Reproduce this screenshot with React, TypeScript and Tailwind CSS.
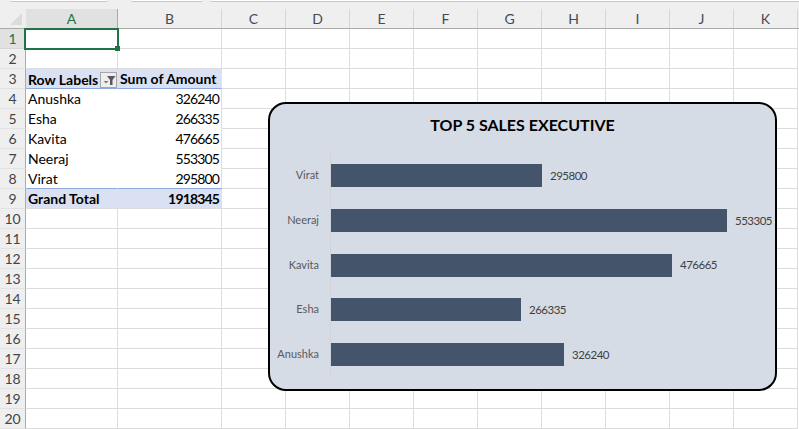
const colWidths = [92, 104, 64, 64, 64, 64, 64, 64, 64, 64, 64];
const colNames = ["A", "B", "C", "D", "E", "F", "G", "H", "I", "J", "K"];
const rowNums = Array.from({ length: 20 }, (_, i) => i + 1);

const pivot = [
  { name: "Anushka", amount: 326240 },
  { name: "Esha", amount: 266335 },
  { name: "Kavita", amount: 476665 },
  { name: "Neeraj", amount: 553305 },
  { name: "Virat", amount: 295800 },
];

const chart = [
  { name: "Virat", value: 295800, w: 211 },
  { name: "Neeraj", value: 553305, w: 396 },
  { name: "Kavita", value: 476665, w: 341 },
  { name: "Esha", value: 266335, w: 190 },
  { name: "Anushka", value: 326240, w: 233 },
];

function FilterButton() {
  return (
    <span className="mt-[2px] flex h-[16px] w-[17px] shrink-0 border border-[#a6a6a6] bg-[#eeeeee]">
      <svg width="15" height="14" viewBox="0 0 15 14">
        <path d="M6 3h8.500L11.500 7v5H9V7z" fill="#595959" />
        <path d="M2.500 8h5L5 10.500z" fill="#7f7f7f" />
      </svg>
    </span>
  );
}

function Cell({ col, row }: { col: number; row: number }) {
  const base = "h-[20px] shrink-0 overflow-hidden border-r border-b border-[#dcdcdc] pt-[1px]";
  const w = colWidths[col];

  if (row === 3 && col === 0) {
    return (
      <div className={`${base} flex items-center justify-between border-r-[#d9e1f2] border-b-[#8ea9db] bg-[#d9e1f2] pl-[2px] pt-0 font-bold`} style={{ width: w }}>
        <span className="pt-[1px]">Row Labels</span>
        <FilterButton />
      </div>
    );
  }
  if (row === 3 && col === 1) {
    return (
      <div className={`${base} flex items-center border-r-[#d9e1f2] border-b-[#8ea9db] bg-[#d9e1f2] pl-[2px] font-bold`} style={{ width: w }}>
        Sum of Amount
      </div>
    );
  }
  if (row >= 4 && row <= 8 && col <= 1) {
    const p = pivot[row - 4];
    const last = row === 8;
    return (
      <div
        className={`${base} flex items-center ${col === 1 ? "justify-end pr-[2px] tracking-[-0.85px]" : "border-r-white pl-[2px]"} ${last ? "border-b-[#8ea9db]" : "border-b-white"}`}
        style={{ width: w }}
      >
        {col === 0 ? p.name : p.amount}
      </div>
    );
  }
  if (row === 9 && col <= 1) {
    return (
      <div
        className={`${base} flex items-center border-r-[#d9e1f2] bg-[#d9e1f2] font-bold ${col === 1 ? "justify-end pr-[2px] tracking-[-0.85px]" : "pl-[2px]"}`}
        style={{ width: w }}
      >
        {col === 0 ? "Grand Total" : "1918345"}
      </div>
    );
  }
  return <div className={base} style={{ width: w }} />;
}

export default function App() {
  return (
    <div className="relative h-[429px] w-[799px] overflow-hidden bg-white font-['Lato',sans-serif] text-[14px] leading-none text-black">
      {/* barra de fórmulas, casi fuera de cuadro */}
      <div className="flex h-[2px] bg-[#efefef]">
        <div className="ml-[10px] w-[98px] rounded-b-[3px] border-b border-[#c6c6c6] bg-white" />
        <div className="ml-[23px] w-[72px] rounded-b-[3px] border-b border-[#c6c6c6] bg-white" />
        <div className="ml-[7px] flex-1 rounded-bl-[3px] border-b border-[#c6c6c6] bg-white" />
      </div>

      {/* encabezado de columnas */}
      <div className="flex h-[27px] items-end border-b border-[#ababab] bg-[#efefef]">
        <div className="flex h-[19px] w-[26px] shrink-0 items-end pb-[3px] pl-[10px]">
          <div className="h-0 w-0 border-b-[12px] border-l-[12px] border-b-[#dcdcdc] border-l-transparent" />
        </div>
        {colNames.map((c, i) => (
          <div
            key={c}
            className={`flex h-[19px] shrink-0 items-center justify-center border-r pt-[1px] ${i === 0 ? "border-[#ababab] bg-[#e1e1e1] text-[#217346]" : "border-[#d6d6d6] text-[#444b55]"}`}
            style={{ width: colWidths[i] }}
          >
            {c}
          </div>
        ))}
      </div>

      {/* filas */}
      {rowNums.map((r) => (
        <div key={r} className="flex h-[20px]">
          <div
            className={`flex w-[26px] shrink-0 items-center justify-center border-b border-r border-[#ababab] pt-[1px] ${r === 1 ? "border-b-[#d6d6d6] bg-[#e1e1e1] text-[#217346]" : "border-b-[#e2e2e2] bg-[#efefef] text-[#444444]"}`}
          >
            {r}
          </div>
          {colWidths.map((_, c) => (
            <Cell key={c} col={c} row={r} />
          ))}
        </div>
      ))}

      {/* celda activa */}
      <div className="absolute left-[24px] top-[28px] h-[22px] w-[95px] border-2 border-[#217346]">
        <div className="absolute -bottom-[3px] -right-[3px] h-[5px] w-[5px] bg-[#217346]" />
      </div>

      {/* gráfico */}
      <div className="absolute left-[268px] top-[102px] flex h-[289px] w-[509px] flex-col rounded-[18px] border-2 border-black bg-[#d6dce5]">
        <div className="pt-[11px] text-center text-[16px] font-bold leading-[20px] text-black">TOP 5 SALES EXECUTIVE</div>
        <div className="mt-[18.200px] flex flex-col">
          {chart.map((b) => (
            <div key={b.name} className="flex h-[44.750px] items-center">
              <div className="mb-[2px] w-[49px] shrink-0 text-right text-[11px] text-[#595959]">{b.name}</div>
              <div className="ml-[11px] flex h-full items-center border-l border-[#cfd3d9]">
                <div className="h-[23px] bg-[#44546a]" style={{ width: b.w }} />
                <span className="ml-[8px] text-[11.500px] tracking-[-0.5px] text-[#404040]">{b.value}</span>
              </div>
            </div>
          ))}
        </div>
      </div>
    </div>
  );
}
